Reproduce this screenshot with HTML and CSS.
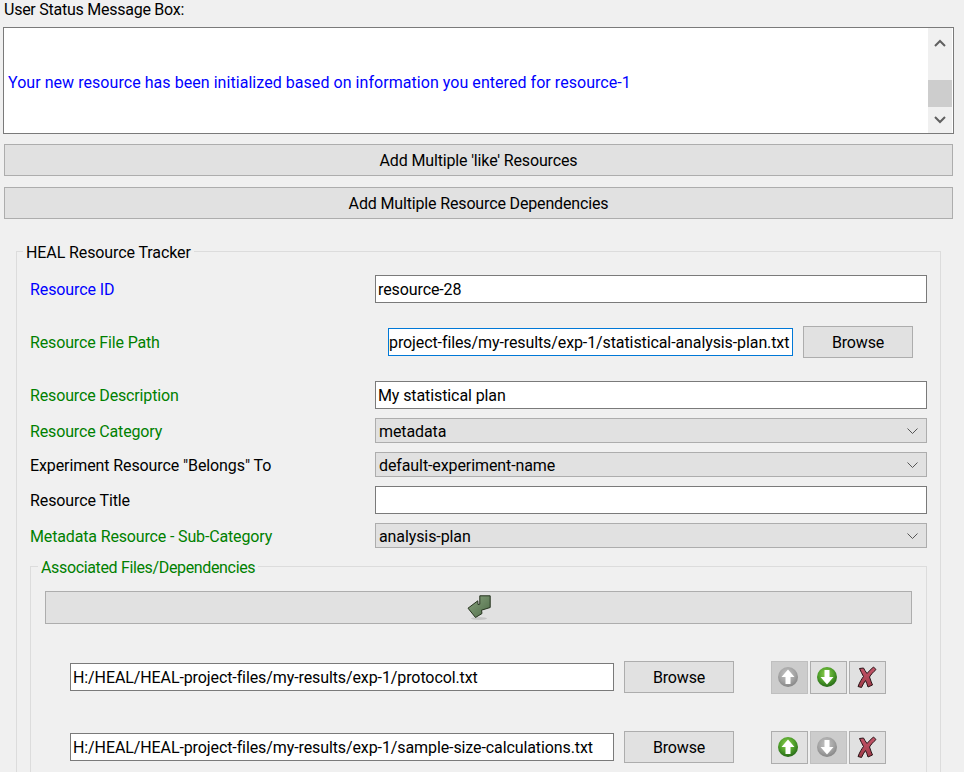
FILE: index.html
```html
<!DOCTYPE html>
<html lang="en">
<head>
<meta charset="utf-8">
<title>HEAL Resource Tracker</title>
<link rel="stylesheet" href="styles.css">
</head>
<body>
<svg class="defs" width="0" height="0" aria-hidden="true">
  <defs>
    <radialGradient id="greenBall" cx="45%" cy="35%" r="70%">
      <stop offset="0" stop-color="#8fd14f"/><stop offset="0.55" stop-color="#4e9e2a"/><stop offset="1" stop-color="#1f5f14"/>
    </radialGradient>
    <radialGradient id="greyBall" cx="45%" cy="35%" r="70%">
      <stop offset="0" stop-color="#c4c4c4"/><stop offset="0.6" stop-color="#a2a2a2"/><stop offset="1" stop-color="#808080"/>
    </radialGradient>
    <linearGradient id="redX" x1="0" y1="0" x2="0" y2="1">
      <stop offset="0" stop-color="#c4566a"/><stop offset="1" stop-color="#a03a48"/>
    </linearGradient>
    <linearGradient id="olive" x1="0" y1="0" x2="1" y2="1">
      <stop offset="0" stop-color="#8aa47f"/><stop offset="1" stop-color="#4d6b47"/>
    </linearGradient>
    <symbol id="arrowUp" viewBox="0 0 22 22"><path d="M11 3.500 17.500 11h-4v7h-5v-7h-4z" fill="#fff"/></symbol>
    <symbol id="arrowDown" viewBox="0 0 22 22"><path d="M11 18.500 4.500 11h4V4h5v7h4z" fill="#fff"/></symbol>
    <symbol id="cross" viewBox="0 0 22 24">
      <path d="M3 21.500c2-5 4-8 5.500-10C7 8.500 5.500 6 4.500 3.500l4-.5c1 2 2 3.500 3.500 5.500 2-2.300 4-4.500 6.500-6.500l2.500 2.500c-2.700 2.500-5 5-6.500 7.500 1 3 2 5.500 3 8l-4.500 2c-.8-2.500-1.500-4.500-2.500-6.500-1.500 2.200-3 4.500-4 7z" fill="url(#redX)" stroke="#2a1518" stroke-width="1"/>
    </symbol>
  </defs>
</svg>
<main class="app">
  <div class="caption">User Status Message Box:</div>
  <section class="status">
    <div class="status-text">Your new resource has been initialized based on information you entered for resource-1</div>
    <div class="scrollbar">
      <svg class="sb-arrow" width="12" height="8" viewBox="0 0 12 8"><path d="M1 7 6 2l5 5" fill="none" stroke="#606060" stroke-width="2"/></svg>
      <div class="sb-thumb"></div>
      <svg class="sb-arrow" width="12" height="8" viewBox="0 0 12 8"><path d="M1 1l5 5 5-5" fill="none" stroke="#606060" stroke-width="2"/></svg>
    </div>
  </section>
  <button class="btn wide first">Add Multiple 'like' Resources</button>
  <button class="btn wide second">Add Multiple Resource Dependencies</button>

  <fieldset class="tracker">
    <legend class="legend">HEAL Resource Tracker</legend>
    <div class="row r-first">
      <div class="label blue">Resource ID</div>
      <div class="input grow">resource-28</div>
    </div>
    <div class="row r-file">
      <div class="label green">Resource File Path</div>
      <div class="file-field">
        <div class="input focus">project-files/my-results/exp-1/statistical-analysis-plan.txt</div>
        <button class="btn browse">Browse</button>
      </div>
    </div>
    <div class="row r-desc">
      <div class="label green">Resource Description</div>
      <div class="input grow">My statistical plan</div>
    </div>
    <div class="row r-combo">
      <div class="label green">Resource Category</div>
      <div class="combo"><span class="combo-text">metadata</span><svg width="11" height="6" viewBox="0 0 11 6"><path d="M.5.500l5 5 5-5" fill="none" stroke="#555"/></svg></div>
    </div>
    <div class="row r-combo">
      <div class="label">Experiment Resource "Belongs" To</div>
      <div class="combo"><span class="combo-text">default-experiment-name</span><svg width="11" height="6" viewBox="0 0 11 6"><path d="M.5.500l5 5 5-5" fill="none" stroke="#555"/></svg></div>
    </div>
    <div class="row r-title">
      <div class="label">Resource Title</div>
      <div class="input grow"></div>
    </div>
    <div class="row r-combo">
      <div class="label green">Metadata Resource - Sub-Category</div>
      <div class="combo"><span class="combo-text">analysis-plan</span><svg width="11" height="6" viewBox="0 0 11 6"><path d="M.5.500l5 5 5-5" fill="none" stroke="#555"/></svg></div>
    </div>

    <fieldset class="deps">
      <legend class="legend green-legend">Associated Files/Dependencies</legend>
      <button class="btn add-dep" aria-label="Add dependency">
        <svg width="26" height="26" viewBox="0 0 26 26">
          <ellipse cx="13" cy="23.500" rx="8" ry="1.500" fill="#000" opacity=".12"/>
          <path d="M13.800.8H24.200V12.500L15.500 15.200 16 18.500 9.500 22.500 2 13.200 11.800 5.800 12 9.500 13.800 9.200z" fill="url(#olive)" stroke="#26331f" stroke-width="1" stroke-linejoin="round"/>
        </svg>
      </button>
      <div class="dep-row">
        <div class="input dep-input">H:/HEAL/HEAL-project-files/my-results/exp-1/protocol.txt</div>
        <button class="btn browse">Browse</button>
        <div class="tools">
          <button class="tool off" aria-label="Move up"><svg width="22" height="22" viewBox="0 0 22 22"><circle cx="11" cy="11" r="10" fill="url(#greyBall)"/><use href="#arrowUp"/></svg></button>
          <button class="tool" aria-label="Move down"><svg width="22" height="22" viewBox="0 0 22 22"><circle cx="11" cy="11" r="10" fill="url(#greenBall)"/><use href="#arrowDown"/></svg></button>
          <button class="tool" aria-label="Remove"><svg width="22" height="24" viewBox="0 0 22 24"><use href="#cross"/></svg></button>
        </div>
      </div>
      <div class="dep-row">
        <div class="input dep-input">H:/HEAL/HEAL-project-files/my-results/exp-1/sample-size-calculations.txt</div>
        <button class="btn browse">Browse</button>
        <div class="tools">
          <button class="tool" aria-label="Move up"><svg width="22" height="22" viewBox="0 0 22 22"><circle cx="11" cy="11" r="10" fill="url(#greenBall)"/><use href="#arrowUp"/></svg></button>
          <button class="tool off" aria-label="Move down"><svg width="22" height="22" viewBox="0 0 22 22"><circle cx="11" cy="11" r="10" fill="url(#greyBall)"/><use href="#arrowDown"/></svg></button>
          <button class="tool" aria-label="Remove"><svg width="22" height="24" viewBox="0 0 22 24"><use href="#cross"/></svg></button>
        </div>
      </div>
    </fieldset>
  </fieldset>
</main>
</body>
</html>
```
FILE: styles.css
```css
* { box-sizing: border-box; }
html, body { margin: 0; height: 772px; overflow: hidden; }
body {
  background: #f0f0f0;
  color: #000;
  font: 16px/20px Roboto, "Open Sans", sans-serif;
  letter-spacing: -0.1px;
}
.defs { position: absolute; }
.app { width: 964px; height: 772px; overflow: hidden; }
.caption { height: 27px; padding: 0 0 0 4px; line-height: 20px; letter-spacing: -0.25px; }

.status {
  display: flex;
  height: 107px;
  margin: 0 10px 0 3px;
  background: #fff;
  border: 1px solid #7a7a7a;
}
.status-text { flex: 1; align-self: center; padding: 4px 0 0 4px; color: #0000ff; letter-spacing: 0.05px; white-space: nowrap; }
.scrollbar {
  width: 24px;
  margin-right: 1px;
  background: #f0f0f0;
  display: flex;
  flex-direction: column;
  align-items: center;
}
.sb-arrow { flex: none; margin-top: 11px; }
.sb-thumb { width: 100%; height: 27px; margin-top: 33px; background: #cdcdcd; }
.sb-thumb + .sb-arrow { margin-top: 9px; }

.btn {
  font: inherit;
  letter-spacing: -0.15px;
  color: #000;
  background: #e1e1e1;
  border: 1px solid #adadad;
  padding: 2px 0 0;
  display: flex;
  align-items: center;
  justify-content: center;
}
.wide { width: 949px; height: 32px; margin-left: 4px; }
.first { margin-top: 10px; }
.second { margin-top: 11px; }

.tracker, .deps {
  margin: 0;
  min-width: 0;
  border: 1px solid #dcdcdc;
}
.tracker { margin: 20px 23px 0 16px; padding: 12px 13px 0; }
.legend { padding: 4px 3px 0; margin-left: -7px; line-height: 20px; white-space: nowrap; }
.green-legend { color: #008000; letter-spacing: -0.35px; }

.row { display: flex; align-items: center; }
.r-first { height: 28px; }
.r-file { height: 32px; margin-top: 23px; }
.r-desc { height: 28px; margin-top: 23px; }
.r-combo { height: 25px; margin-top: 9px; }
.r-title { height: 28px; margin-top: 9px; }

.label { width: 345px; flex: none; padding-top: 2px; white-space: nowrap; }
.blue { color: #0000ff; }
.green { color: #008000; letter-spacing: -0.15px; }

.input {
  height: 28px;
  background: #fff;
  border: 1px solid #7a7a7a;
  padding: 0 2px;
  line-height: 28px;
  white-space: nowrap;
  overflow: hidden;
}
.grow { flex: 1; }
.focus { width: 405px; border-color: #0078d7; padding-left: 0; }
.file-field { display: flex; align-items: center; gap: 10px; margin-left: 13px; }
.browse { width: 110px; height: 32px; flex: none; }

.combo {
  flex: 1;
  height: 25px;
  background: #e1e1e1;
  border: 1px solid #adadad;
  padding: 0 8px 0 3px;
  display: flex;
  align-items: center;
  justify-content: space-between;
}
.combo-text { padding-top: 2px; }

.deps { margin-top: 6px; padding: 13px 14px 0; height: 260px; }
.add-dep { width: 867px; height: 33px; padding: 0; }
.dep-row { display: flex; align-items: flex-start; margin: 37px 0 0 25px; height: 33px; gap: 10px; }
.dep-input { width: 544px; flex: none; margin-top: 2px; }
.tools { display: flex; gap: 2px; margin-left: 27px; }
.tool {
  width: 37px;
  height: 33px;
  padding: 0 3px 2px 0;
  background: #e1e1e1;
  border: 1px solid #adadad;
  display: flex;
  align-items: center;
  justify-content: center;
}
.off { background: #cccccc; border-color: #bfbfbf; }
```
